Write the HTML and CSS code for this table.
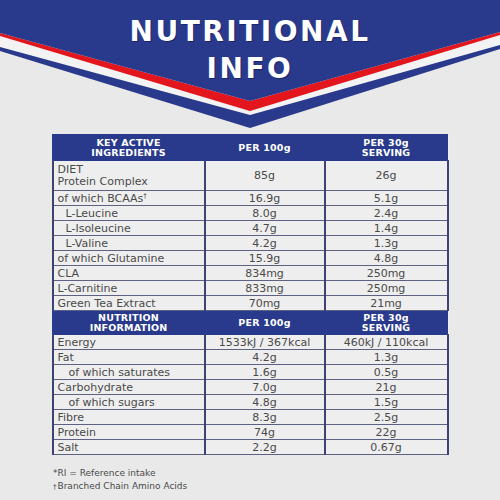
FILE: index.html
```html
<!DOCTYPE html>
<html lang="en">
<head>
  <meta charset="UTF-8">
  <meta name="viewport" content="width=device-width, initial-scale=1.0">
  <title>Nutritional Info</title>
  <link rel="stylesheet" href="styles.css">
</head>
<body>

  <div class="banner">
    <svg class="banner-bg" width="500" height="134" viewBox="0 0 500 134">
      <polygon points="0,33 250,112 500,32 500,46 250,117 0,47" fill="#f3f3f3"/>
      <polygon points="0,33 250,101 500,32 500,35 250,111 0,36" fill="#e3161d"/>
      <polygon points="0,0 500,0 500,32 250,101 0,33" fill="#29398b"/>
      <polygon points="0,47 250,115 500,45 500,49 250,128 0,51" fill="#29398b"/>
    </svg>
    <h1 class="title">NUTRITIONAL<br>INFO</h1>
  </div>

  <table class="facts">
    <colgroup>
      <col class="c-name">
      <col class="c-val">
      <col class="c-val2">
    </colgroup>
    <tr class="head">
      <th>KEY ACTIVE<br>INGREDIENTS</th>
      <th>PER 100g</th>
      <th>PER 30g<br>SERVING</th>
    </tr>
    <tr class="tall">
      <td class="name">DIET<br>Protein Complex</td>
      <td>85g</td>
      <td>26g</td>
    </tr>
    <tr>
      <td class="name">of which BCAAs<sup>†</sup></td>
      <td>16.9g</td>
      <td>5.1g</td>
    </tr>
    <tr>
      <td class="name sub">L-Leucine</td>
      <td>8.0g</td>
      <td>2.4g</td>
    </tr>
    <tr>
      <td class="name sub">L-Isoleucine</td>
      <td>4.7g</td>
      <td>1.4g</td>
    </tr>
    <tr>
      <td class="name sub">L-Valine</td>
      <td>4.2g</td>
      <td>1.3g</td>
    </tr>
    <tr>
      <td class="name">of which Glutamine</td>
      <td>15.9g</td>
      <td>4.8g</td>
    </tr>
    <tr>
      <td class="name">CLA</td>
      <td>834mg</td>
      <td>250mg</td>
    </tr>
    <tr>
      <td class="name">L-Carnitine</td>
      <td>833mg</td>
      <td>250mg</td>
    </tr>
    <tr>
      <td class="name">Green Tea Extract</td>
      <td>70mg</td>
      <td>21mg</td>
    </tr>
    <tr class="head head2">
      <th>NUTRITION<br>INFORMATION</th>
      <th>PER 100g</th>
      <th>PER 30g<br>SERVING</th>
    </tr>
    <tr>
      <td class="name">Energy</td>
      <td>1533kJ / 367kcal</td>
      <td>460kJ / 110kcal</td>
    </tr>
    <tr>
      <td class="name">Fat</td>
      <td>4.2g</td>
      <td>1.3g</td>
    </tr>
    <tr>
      <td class="name sub2">of which saturates</td>
      <td>1.6g</td>
      <td>0.5g</td>
    </tr>
    <tr>
      <td class="name">Carbohydrate</td>
      <td>7.0g</td>
      <td>21g</td>
    </tr>
    <tr>
      <td class="name sub2">of which sugars</td>
      <td>4.8g</td>
      <td>1.5g</td>
    </tr>
    <tr>
      <td class="name">Fibre</td>
      <td>8.3g</td>
      <td>2.5g</td>
    </tr>
    <tr>
      <td class="name">Protein</td>
      <td>74g</td>
      <td>22g</td>
    </tr>
    <tr>
      <td class="name">Salt</td>
      <td>2.2g</td>
      <td>0.67g</td>
    </tr>
  </table>

  <div class="notes">
    <p>*RI = Reference intake</p>
    <p><span class="dag">†</span>Branched Chain Amino Acids</p>
  </div>

</body>
</html>
```

FILE: styles.css
```css
body {
  margin: 0;
  padding: 0;
  width: 500px;
  height: 500px;
  overflow: hidden;
  background-color: #e9e9e9;
  font-family: 'DejaVu Sans', sans-serif;
  color: #4a4a4a;
}

.banner {
  position: relative;
  height: 134px;
}

.banner-bg {
  position: absolute;
  top: 0;
  left: 0;
  display: block;
}

.title {
  position: relative;
  margin: 0;
  padding-top: 13px;
  text-align: center;
  color: #fff;
  font-family: 'DejaVu Sans', sans-serif;
  font-weight: bold;
  font-size: 28px;
  line-height: 37px;
  letter-spacing: 2.5px;
  text-shadow: 1px 1px 0 #1b2566;
}

.facts {
  width: 395px;
  margin: 0 auto;
  border-collapse: collapse;
  table-layout: fixed;
  background-color: #eeeeee;
  font-size: 11px;
}

.c-name { width: 152px; }
.c-val { width: 120px; }
.c-val2 { width: 123px; }

.facts td {
  height: 14px;
  padding: 0;
  text-align: center;
  line-height: 13px;
  border-top: 1px solid #5d6283;
  border-bottom: 1px solid #5d6283;
  border-left: 2px solid #3d4372;
  border-right: 2px solid #3d4372;
  white-space: nowrap;
}

.facts .tall td {
  height: 29px;
  line-height: 12px;
}

.facts td.name {
  text-align: left;
  padding-left: 4px;
}

.facts td.sub { padding-left: 12px; }
.facts td.sub2 { padding-left: 15px; }

.facts sup {
  font-size: 7px;
  line-height: 0;
  vertical-align: 4px;
}

.head th {
  height: 25px;
  padding: 0;
  background-color: #29398b;
  color: #fff;
  font-weight: bold;
  font-size: 9.5px;
  line-height: 10px;
  letter-spacing: 0.2px;
  text-align: center;
  border: 1px solid #29398b;
}

.head2 th {
  height: 23px;
}

.notes {
  margin: 0;
  padding: 12px 0 0 53px;
  font-size: 9px;
  line-height: 13px;
  color: #4a4a4a;
}

.notes p {
  margin: 0;
}

.dag {
  font-size: 7px;
  margin-right: 1px;
}
```
